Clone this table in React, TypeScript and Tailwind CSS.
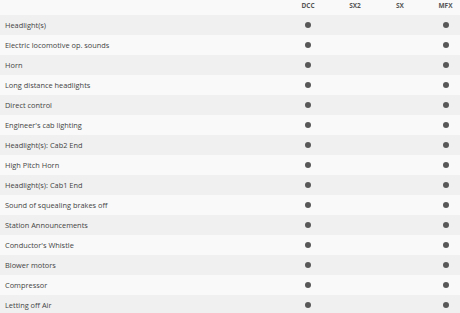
import React from "react";

const rows: { name: string; dcc: boolean; sx2: boolean; sx: boolean; mfx: boolean }[] = [
  { name: "Headlight(s)", dcc: true, sx2: false, sx: false, mfx: true },
  { name: "Electric locomotive op. sounds", dcc: true, sx2: false, sx: false, mfx: true },
  { name: "Horn", dcc: true, sx2: false, sx: false, mfx: true },
  { name: "Long distance headlights", dcc: true, sx2: false, sx: false, mfx: true },
  { name: "Direct control", dcc: true, sx2: false, sx: false, mfx: true },
  { name: "Engineer's cab lighting", dcc: true, sx2: false, sx: false, mfx: true },
  { name: "Headlight(s): Cab2 End", dcc: true, sx2: false, sx: false, mfx: true },
  { name: "High Pitch Horn", dcc: true, sx2: false, sx: false, mfx: true },
  { name: "Headlight(s): Cab1 End", dcc: true, sx2: false, sx: false, mfx: true },
  { name: "Sound of squealing brakes off", dcc: true, sx2: false, sx: false, mfx: true },
  { name: "Station Announcements", dcc: true, sx2: false, sx: false, mfx: true },
  { name: "Conductor's Whistle", dcc: true, sx2: false, sx: false, mfx: true },
  { name: "Blower motors", dcc: true, sx2: false, sx: false, mfx: true },
  { name: "Compressor", dcc: true, sx2: false, sx: false, mfx: true },
  { name: "Letting off Air", dcc: true, sx2: false, sx: false, mfx: true },
];

const Dot = ({ on }: { on: boolean }) =>
  on ? <span className="block w-[6px] h-[6px] rounded-full bg-[#585858]" /> : null;

export default function App() {
  return (
    <div
      className="w-[460px] h-[313px] overflow-hidden bg-[#f9f9f9] text-[#444444]"
      style={{ fontFamily: '"Open Sans", "Liberation Sans", sans-serif' }}
    >
      <div className="grid grid-cols-[284px_48px_46px_44px_38px] h-[15px] bg-[#f9f9f9] text-[6.5px] font-bold text-[#555555] leading-none">
        <div />
        <div className="flex justify-center pt-[2.5px]">DCC</div>
        <div className="flex justify-center pt-[2.5px]">SX2</div>
        <div className="flex justify-center pt-[2.5px]">SX</div>
        <div className="flex justify-center pt-[2.5px] pl-[9px]">MFX</div>
      </div>
      {rows.map((r, i) => (
        <div
          key={r.name}
          className={`grid grid-cols-[284px_48px_46px_44px_38px] h-[20px] items-center text-[7.4px] ${
            i % 2 === 0 ? "bg-[#f0f0f0]" : "bg-[#f9f9f9]"
          }`}
        >
          <div className="pl-[5px] pt-[1px] whitespace-nowrap">{r.name}</div>
          <div className="flex justify-center"><Dot on={r.dcc} /></div>
          <div className="flex justify-center"><Dot on={r.sx2} /></div>
          <div className="flex justify-center"><Dot on={r.sx} /></div>
          <div className="flex justify-center pl-[9px]"><Dot on={r.mfx} /></div>
        </div>
      ))}
    </div>
  );
}
